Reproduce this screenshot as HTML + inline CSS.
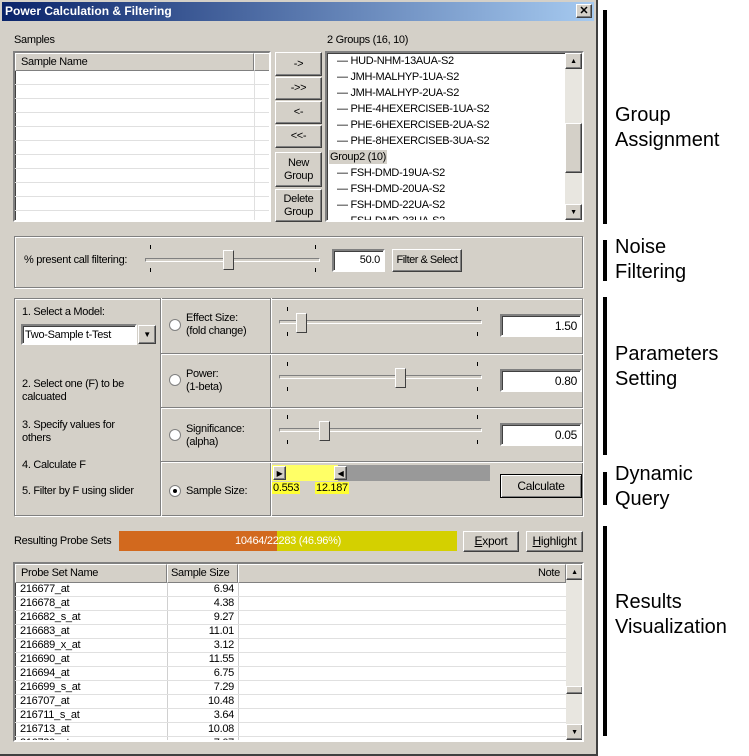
<!DOCTYPE html>
<html><head><style>
*{box-sizing:border-box;margin:0;padding:0;white-space:nowrap}
body{width:749px;height:756px;background:#fff;font-family:"Liberation Sans",sans-serif;font-size:11px;color:#000;position:relative;overflow:hidden}
.a{position:absolute}
.dlg{left:0;top:0;width:598px;height:756px;background:#d4d0c8;border-right:2px solid #404040;border-bottom:2px solid #404040}
.title{left:2px;top:2px;width:592px;height:19px;background:linear-gradient(90deg,#0a246a,#a6caf0);color:#fff;font-weight:bold;font-size:12px;padding:2px 3px}
.sunk{background:#fff;border:2px solid;border-color:#808080 #fff #fff #808080;box-shadow:inset 1px 1px 0 #404040}
.btn{background:#d4d0c8;border:1px solid;border-color:#fff #404040 #404040 #fff;box-shadow:inset -1px -1px 0 #808080;text-align:center;display:flex;align-items:center;justify-content:center;line-height:13px;flex-direction:column}
.grp{border:1px solid #808080;box-shadow:1px 1px 0 #fff, inset 1px 1px 0 #fff}
.hdr{background:#d4d0c8;border:1px solid;border-color:#fff #808080 #808080 #fff;padding:2px 5px}
.row{height:14px;border-bottom:1px solid #e0e0e0}
.track{height:4px;border:1px solid;border-color:#808080 #fff #fff #808080;background:#d4d0c8}
.thumb{width:11px;height:20px;background:#d4d0c8;border:1px solid;border-color:#fff #404040 #404040 #fff}
.tick{width:1px;height:4px;background:#000}
.radio{width:12px;height:12px;border-radius:50%;background:#fff;border:1px solid #808080}
.ann{left:615px;font-size:20px;line-height:25px}
.bar{left:603px;width:4px;background:#000}
.tr{position:absolute;left:10px;font-size:11px}
.sb{background:#e8e6e0}
.dlgt{letter-spacing:-0.3px}
</style></head><body>
<div class="a dlg"></div>
<div class="a title">Power Calculation &amp; Filtering</div>
<div class="a btn" style="left:576px;top:4px;width:16px;height:14px;font-size:11px;font-weight:bold">✕</div>
<div class="dlgt">
<div class="a" style="left:14px;top:34px">Samples</div>
<div class="a" style="left:327px;top:34px">2 Groups (16, 10)</div>

<div class="a sunk" style="left:13px;top:51px;width:258px;height:171px;overflow:hidden">
 <div class="a hdr" style="left:0;top:0;width:239px;height:18px">Sample Name</div>
 <div class="a hdr" style="left:239px;top:0;width:16px;height:18px"></div>
 <div class="a" style="left:239px;top:18px;width:1px;height:160px;background:#e0e0e0"></div>
 <div class="a" style="left:0;top:18px;width:254px">
 <div class="row"></div><div class="row"></div><div class="row"></div><div class="row"></div><div class="row"></div><div class="row"></div><div class="row"></div><div class="row"></div><div class="row"></div><div class="row"></div><div class="row"></div></div>
</div>

<div class="a btn" style="left:275px;top:52px;width:47px;height:24px">-&gt;</div>
<div class="a btn" style="left:275px;top:77px;width:47px;height:23px">-&gt;&gt;</div>
<div class="a btn" style="left:275px;top:101px;width:47px;height:23px">&lt;-</div>
<div class="a btn" style="left:275px;top:125px;width:47px;height:23px">&lt;&lt;-</div>
<div class="a btn" style="left:275px;top:152px;width:47px;height:35px"><span>New</span><span>Group</span></div>
<div class="a btn" style="left:275px;top:189px;width:47px;height:33px"><span>Delete</span><span>Group</span></div>

<div class="a sunk" style="left:325px;top:51px;width:259px;height:171px;overflow:hidden">
 <div class="tr" style="top:2px">— HUD-NHM-13AUA-S2</div>
 <div class="tr" style="top:18px">— JMH-MALHYP-1UA-S2</div>
 <div class="tr" style="top:34px">— JMH-MALHYP-2UA-S2</div>
 <div class="tr" style="top:50px">— PHE-4HEXERCISEB-1UA-S2</div>
 <div class="tr" style="top:66px">— PHE-6HEXERCISEB-2UA-S2</div>
 <div class="tr" style="top:82px">— PHE-8HEXERCISEB-3UA-S2</div>
 <div class="a" style="left:2px;top:97px;background:#d4d0c8;padding:1px 1px">Group2 (10)</div>
 <div class="tr" style="top:114px">— FSH-DMD-19UA-S2</div>
 <div class="tr" style="top:130px">— FSH-DMD-20UA-S2</div>
 <div class="tr" style="top:146px">— FSH-DMD-22UA-S2</div>
 <div class="tr" style="top:162px">— FSH-DMD-23UA-S2</div>
 <div class="a sb" style="left:238px;top:0;width:17px;height:167px"></div>
 <div class="a btn" style="left:238px;top:0;width:17px;height:16px;font-size:7px">▲</div>
 <div class="a btn" style="left:238px;top:70px;width:17px;height:50px"></div>
 <div class="a btn" style="left:238px;top:151px;width:17px;height:16px;font-size:7px">▼</div>
</div>

<div class="a grp" style="left:14px;top:236px;width:569px;height:52px"></div>
<div class="a" style="left:24px;top:254px">% present call filtering:</div>
<div class="a track" style="left:145px;top:258px;width:175px"></div>
<div class="a tick" style="left:150px;top:245px"></div><div class="a tick" style="left:315px;top:245px"></div>
<div class="a tick" style="left:150px;top:268px"></div><div class="a tick" style="left:315px;top:268px"></div>
<div class="a thumb" style="left:223px;top:250px"></div>
<div class="a sunk" style="left:332px;top:249px;width:53px;height:23px;text-align:right;padding:3px 3px">50.0</div>
<div class="a btn" style="left:392px;top:249px;width:70px;height:23px;letter-spacing:-0.5px">Filter &amp; Select</div>

<div class="a grp" style="left:14px;top:298px;width:569px;height:218px"></div>
<div class="a" style="left:160px;top:298px;width:1px;height:218px;background:#808080;box-shadow:1px 0 0 #fff"></div>
<div class="a" style="left:270px;top:298px;width:1px;height:218px;background:#808080;box-shadow:1px 0 0 #fff"></div>
<div class="a" style="left:161px;top:353px;width:422px;height:1px;background:#808080;box-shadow:0 1px 0 #fff"></div>
<div class="a" style="left:161px;top:407px;width:422px;height:1px;background:#808080;box-shadow:0 1px 0 #fff"></div>
<div class="a" style="left:161px;top:461px;width:422px;height:1px;background:#808080;box-shadow:0 1px 0 #fff"></div>

<div class="a" style="left:22px;top:306px">1. Select a Model:</div>
<div class="a sunk" style="left:21px;top:324px;width:116px;height:21px;padding:3px 2px;font-size:11px">Two-Sample t-Test</div>
<div class="a btn" style="left:138px;top:325px;width:18px;height:19px;font-size:8px">▼</div>
<div class="a" style="left:22px;top:378px;line-height:13px">2. Select one (F) to be<br>calcuated</div>
<div class="a" style="left:22px;top:419px;line-height:13px">3. Specify values for<br>others</div>
<div class="a" style="left:22px;top:459px">4. Calculate F</div>
<div class="a" style="left:22px;top:485px">5. Filter by F using slider</div>

<div class="a radio" style="left:169px;top:319px"></div>
<div class="a" style="left:186px;top:312px;line-height:13px">Effect Size:<br>(fold change)</div>
<div class="a radio" style="left:169px;top:374px"></div>
<div class="a" style="left:186px;top:368px;line-height:13px">Power:<br>(1-beta)</div>
<div class="a radio" style="left:169px;top:429px"></div>
<div class="a" style="left:186px;top:423px;line-height:13px">Significance:<br>(alpha)</div>
<div class="a radio" style="left:169px;top:485px"><div class="a" style="left:3px;top:3px;width:4px;height:4px;border-radius:50%;background:#000"></div></div>
<div class="a" style="left:186px;top:485px">Sample Size:</div>

<div class="a track" style="left:279px;top:320px;width:203px"></div>
<div class="a thumb" style="left:296px;top:313px"></div>
<div class="a tick" style="left:287px;top:307px"></div><div class="a tick" style="left:477px;top:307px"></div><div class="a tick" style="left:287px;top:332px"></div><div class="a tick" style="left:477px;top:332px"></div>
<div class="a sunk" style="left:500px;top:314px;width:82px;height:23px;text-align:right;padding:3px 3px;font-size:12px">1.50</div>

<div class="a track" style="left:279px;top:375px;width:203px"></div>
<div class="a thumb" style="left:395px;top:368px"></div>
<div class="a tick" style="left:287px;top:362px"></div><div class="a tick" style="left:477px;top:362px"></div><div class="a tick" style="left:287px;top:387px"></div><div class="a tick" style="left:477px;top:387px"></div>
<div class="a sunk" style="left:500px;top:369px;width:82px;height:23px;text-align:right;padding:3px 3px;font-size:12px">0.80</div>

<div class="a track" style="left:279px;top:428px;width:203px"></div>
<div class="a thumb" style="left:319px;top:421px"></div>
<div class="a tick" style="left:287px;top:415px"></div><div class="a tick" style="left:477px;top:415px"></div><div class="a tick" style="left:287px;top:440px"></div><div class="a tick" style="left:477px;top:440px"></div>
<div class="a sunk" style="left:500px;top:423px;width:82px;height:23px;text-align:right;padding:3px 3px;font-size:12px">0.05</div>

<div class="a" style="left:272px;top:465px;width:218px;height:16px;background:#999"></div>
<div class="a" style="left:272px;top:465px;width:66px;height:16px;background:#ffff66"></div>
<div class="a btn" style="left:273px;top:466px;width:13px;height:14px;font-size:8px">▶</div>
<div class="a btn" style="left:334px;top:466px;width:13px;height:14px;font-size:8px">◀</div>
<div class="a" style="left:272px;top:482px;background:#ffff33;padding:0 1px">0.553</div>
<div class="a" style="left:315px;top:482px;background:#ffff33;padding:0 1px">12.187</div>
<div class="a btn" style="left:500px;top:474px;width:82px;height:24px;border:1px solid #000;box-shadow:inset 1px 1px 0 #fff,inset -1px -1px 0 #808080;font-size:12px">Calculate</div>

<div class="a" style="left:14px;top:535px">Resulting Probe Sets</div>
<div class="a" style="left:119px;top:531px;width:338px;height:20px;background:#d4d000"></div>
<div class="a" style="left:119px;top:531px;width:158px;height:20px;background:#d2691e"></div>
<div class="a" style="left:119px;top:535px;width:338px;text-align:center;color:#fff">10464/22283 (46.96%)</div>
<div class="a btn" style="left:463px;top:531px;width:56px;height:21px;font-size:12px"><span><u>E</u>xport</span></div>
<div class="a btn" style="left:526px;top:531px;width:57px;height:21px;font-size:12px"><span><u>H</u>ighlight</span></div>

<div class="a sunk" style="left:13px;top:562px;width:571px;height:180px;overflow:hidden">
 <div class="a hdr" style="left:0;top:0;width:152px;height:19px">Probe Set Name</div>
 <div class="a hdr" style="left:152px;top:0;width:71px;height:19px;padding:2px 3px">Sample Size</div>
 <div class="a hdr" style="left:223px;top:0;width:328px;height:19px;text-align:right">Note</div>
 <div class="a" style="left:152px;top:19px;width:1px;height:160px;background:#d0d0d0"></div>
 <div class="a" style="left:223px;top:19px;width:1px;height:160px;background:#d0d0d0"></div>
 <div class="a" style="left:0;top:19px;width:551px;line-height:13px;font-size:11px">
 <div class="row" style="display:flex"><span style="width:148px;padding-left:5px">216677_at</span><span style="width:71px;text-align:right">6.94</span></div>
 <div class="row" style="display:flex"><span style="width:148px;padding-left:5px">216678_at</span><span style="width:71px;text-align:right">4.38</span></div>
 <div class="row" style="display:flex"><span style="width:148px;padding-left:5px">216682_s_at</span><span style="width:71px;text-align:right">9.27</span></div>
 <div class="row" style="display:flex"><span style="width:148px;padding-left:5px">216683_at</span><span style="width:71px;text-align:right">11.01</span></div>
 <div class="row" style="display:flex"><span style="width:148px;padding-left:5px">216689_x_at</span><span style="width:71px;text-align:right">3.12</span></div>
 <div class="row" style="display:flex"><span style="width:148px;padding-left:5px">216690_at</span><span style="width:71px;text-align:right">11.55</span></div>
 <div class="row" style="display:flex"><span style="width:148px;padding-left:5px">216694_at</span><span style="width:71px;text-align:right">6.75</span></div>
 <div class="row" style="display:flex"><span style="width:148px;padding-left:5px">216699_s_at</span><span style="width:71px;text-align:right">7.29</span></div>
 <div class="row" style="display:flex"><span style="width:148px;padding-left:5px">216707_at</span><span style="width:71px;text-align:right">10.48</span></div>
 <div class="row" style="display:flex"><span style="width:148px;padding-left:5px">216711_s_at</span><span style="width:71px;text-align:right">3.64</span></div>
 <div class="row" style="display:flex"><span style="width:148px;padding-left:5px">216713_at</span><span style="width:71px;text-align:right">10.08</span></div>
 <div class="row" style="display:flex"><span style="width:148px;padding-left:5px">216720_at</span><span style="width:71px;text-align:right">7.07</span></div>
 </div>
 <div class="a sb" style="left:551px;top:0;width:17px;height:176px"></div>
 <div class="a btn" style="left:551px;top:0;width:17px;height:16px;font-size:7px">▲</div>
 <div class="a btn" style="left:551px;top:122px;width:17px;height:8px"></div>
 <div class="a btn" style="left:551px;top:160px;width:17px;height:16px;font-size:7px">▼</div>
</div>
</div>

<div class="a bar" style="top:10px;height:214px"></div>
<div class="a bar" style="top:240px;height:41px"></div>
<div class="a bar" style="top:297px;height:158px"></div>
<div class="a bar" style="top:472px;height:33px"></div>
<div class="a bar" style="top:526px;height:210px"></div>
<div class="a ann" style="top:103px">Group<br>Assignment</div>
<div class="a ann" style="top:235px">Noise<br>Filtering</div>
<div class="a ann" style="top:342px">Parameters<br>Setting</div>
<div class="a ann" style="top:462px">Dynamic<br>Query</div>
<div class="a ann" style="top:590px">Results<br>Visualization</div>
</body></html>
